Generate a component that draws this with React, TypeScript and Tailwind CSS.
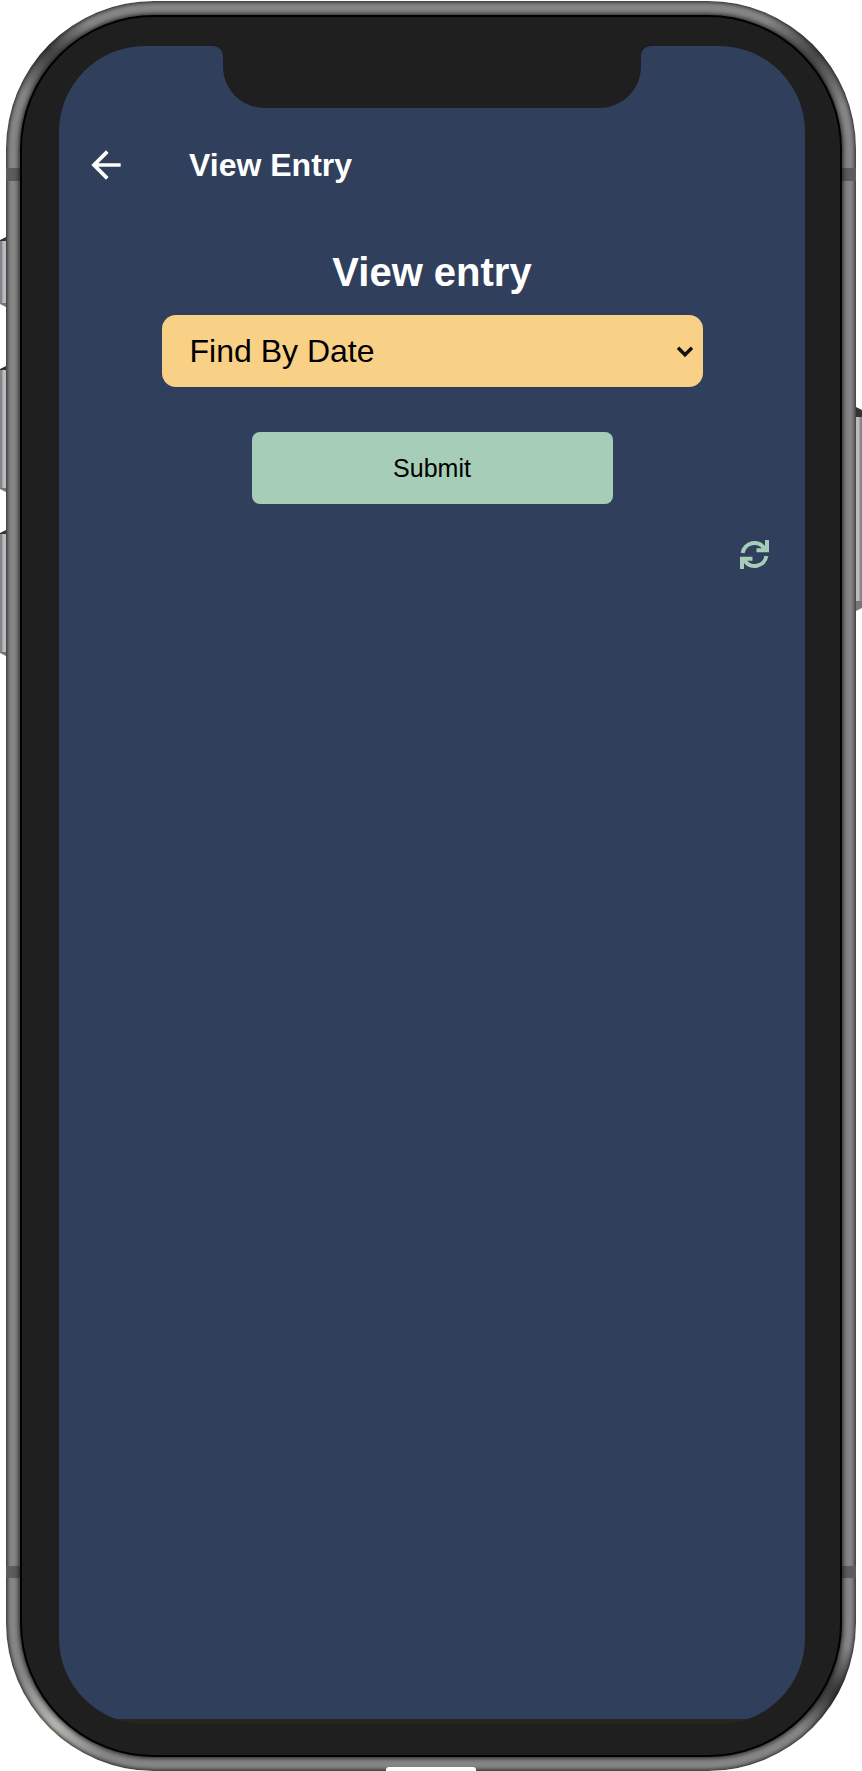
import { MdArrowBack } from "react-icons/md";

function Notch() {
  return (
    <svg
      className="mx-auto block h-[62px] w-[440px] text-[#1f1f1f]"
      viewBox="0 0 440 62"
      fill="currentColor"
      aria-hidden="true"
    >
      <path d="M0 0C7 0 11 4 11 11V20C11 44 30 62 53 62H387C410 62 429 44 429 20V11C429 4 433 0 440 0Z" />
    </svg>
  );
}

function RefreshIcon() {
  return (
    <svg className="size-[29px]" viewBox="0 0 29 29" fill="none" stroke="currentColor" strokeWidth="4" aria-hidden="true">
      <path d="M2.6 13A12 12 0 0 1 24.6 8.6" />
      <path d="M16.5 10.2H27V0" />
      <path d="M26.4 16A12 12 0 0 1 4.4 20.4" />
      <path d="M12.5 18.8H2V29" />
    </svg>
  );
}

function LeftKey({ place }: { place: string }) {
  return (
    <span
      className={`absolute left-[-6px] w-[6px] border-y-4 border-t-[#333333] border-b-[#777777] bg-linear-to-r from-[#85858c] from-30% to-[#bcbcbe] to-50% [clip-path:polygon(0_3px,100%_0,100%_100%,0_calc(100%-3px))] ${place}`}
    />
  );
}

function PhoneTrim() {
  return (
    <div aria-hidden="true">
      <LeftKey place="top-[236px] h-[70px]" />
      <LeftKey place="top-[365px] h-[126px]" />
      <LeftKey place="top-[529px] h-[126px]" />
      <span className="absolute top-[406px] right-[-6px] h-[204px] w-[6px] border-y-[10px] border-t-[#333333] border-b-[#777777] bg-linear-to-l from-[#85858c] from-30% to-[#bcbcbe] to-50% [clip-path:polygon(0_0,100%_3px,100%_calc(100%-3px),0_100%)]" />
      <span className="absolute top-[167px] left-0 h-[13px] w-[14px] bg-[#5c5c5c]" />
      <span className="absolute top-[167px] right-0 h-[13px] w-[14px] bg-[#5c5c5c]" />
      <span className="absolute bottom-[193px] left-0 h-[12px] w-[14px] bg-[#5c5c5c]" />
      <span className="absolute right-0 bottom-[193px] h-[12px] w-[14px] bg-[#5c5c5c]" />
      <span className="absolute bottom-0 left-1/2 h-[4px] w-[90px] -translate-x-1/2 rounded-t-[3px] bg-white" />
    </div>
  );
}

export default function App() {
  return (
    <div className="flex min-h-screen flex-col bg-white px-[6px] pt-px font-['Liberation_Sans',Arial,sans-serif]">
      <div className="relative flex flex-1 flex-col rounded-[148px] bg-[#868686] bg-[radial-gradient(circle_at_40px_48px,#3c3c3c,transparent_50px),radial-gradient(circle_at_calc(100%-38px)_50px,#444444,transparent_60px),radial-gradient(circle_at_46px_calc(100%-44px),#b8b7b0,transparent_60px),radial-gradient(circle_at_calc(100%-18px)_calc(100%-76px),#303030,transparent_50px)] p-[14px] shadow-[inset_0_0_4px_1px_#1c1c1c]">
        <PhoneTrim />
        <div className="relative flex flex-1 flex-col rounded-[134px] border-2 border-black bg-[#1f1f1f] pt-[29px] pr-[35px] pb-[31px] pl-[37px] shadow-[0_0_5px_1px_#1c1c1c]">
          <div className="flex flex-1 flex-col overflow-hidden rounded-[86px] bg-[#28241f] pb-[5px]">
            <div className="flex-1 bg-[#303f5c]">
              <Notch />
              <header className="flex h-[114px] items-center pl-[25px] text-white">
                <button type="button" aria-label="Back">
                  <MdArrowBack className="size-11" />
                </button>
                <h1 className="ml-[61px] text-[32px] leading-10 font-bold">View Entry</h1>
              </header>
              <main className="flex flex-col items-center">
                <h2 className="mt-[25px] text-[40px] leading-[50px] font-bold text-white">View entry</h2>
                <form className="flex w-full flex-col items-center" onSubmit={(e) => e.preventDefault()}>
                  <div className="relative mt-[18px] w-[541px] max-w-full">
                    <select
                      aria-label="Find entries by"
                      className="h-[72px] w-full appearance-none rounded-[14px] bg-[#f8d187] pr-12 pl-7 text-[32px] text-black"
                    >
                      <option>Find By Date</option>
                    </select>
                    <svg
                      className="pointer-events-none absolute top-[31px] right-[9px] h-[12px] w-[18px]"
                      viewBox="0 0 18 12"
                      fill="none"
                      stroke="#111111"
                      strokeWidth="3.4"
                      aria-hidden="true"
                    >
                      <path d="M2 1.8L9 8.8L16 1.8" />
                    </svg>
                  </div>
                  <button
                    type="submit"
                    className="mt-[45px] h-[72px] w-[361px] max-w-full rounded-[8px] bg-[#a6cdb7] pt-0.5 text-[25px] text-black"
                  >
                    Submit
                  </button>
                </form>
                <button type="button" aria-label="Refresh" className="mt-9 mr-9 self-end text-[#a6cdb7]">
                  <RefreshIcon />
                </button>
              </main>
            </div>
          </div>
        </div>
      </div>
    </div>
  );
}
